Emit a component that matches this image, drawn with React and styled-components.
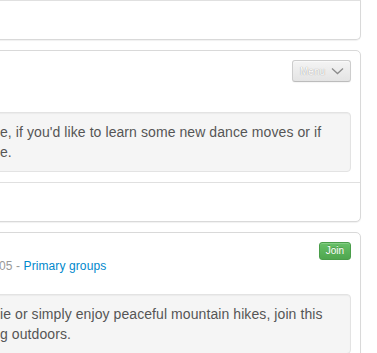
import React from "react";
import styled, { createGlobalStyle } from "styled-components";

const GlobalStyle = createGlobalStyle`
  html, body {
    margin: 0;
    padding: 0;
    background: #ffffff;
    overflow: hidden;
  }
  body {
    font-family: "Liberation Sans", Arial, Helvetica, sans-serif;
    color: #555;
  }
`;

const Feed = styled.div`
  display: flex;
  flex-direction: column;
  gap: 10px;
  width: 381px;
  margin-left: -20px;
`;

const Card = styled.section`
  background: #fff;
  border: 1px solid #d9d9d9;
  border-radius: 5px;
  box-shadow: 0 1px 1px rgba(0, 0, 0, 0.06);
`;

/* the lower part of a card whose top lies above the visible page */
const CardTail = styled(Card)`
  border-top-color: #e0e0e0;
  border-top-left-radius: 0;
  border-top-right-radius: 0;
  height: 38px;
`;

const CardBody = styled.div`
  padding: 9px 9px 10px;
`;

const Header = styled.div`
  display: flex;
  justify-content: space-between;
  align-items: flex-start;
  min-height: 32px;
`;

const Info = styled.div`
  padding: 16px 0 0 10px;
`;

const Meta = styled.div`
  font-size: 12px;
  line-height: 16px;
  color: #999;
  letter-spacing: 0.1px;
  white-space: nowrap;
  margin-left: -1px;
`;

const Link = styled.a`
  color: #0088cc;
  text-decoration: none;
`;

const MenuButton = styled.button`
  display: flex;
  align-items: center;
  gap: 6px;
  height: 22px;
  padding: 0 6px 0 7px;
  border: 1px solid #cdcdcd;
  border-bottom-color: #bcbcbc;
  border-radius: 3px;
  background: linear-gradient(#f4f4f4, #e4e4e4);
  box-shadow: inset 0 1px 0 rgba(255, 255, 255, 0.5), 0 1px 1px rgba(0, 0, 0, 0.04);
  font-family: inherit;
  font-size: 10px;
  color: #ffffff;
  text-shadow: 0 0 1px rgba(0, 0, 0, 0.45);
  cursor: pointer;
`;

const JoinButton = styled.button`
  height: 18px;
  padding: 0 6px;
  border: 1px solid #4a9d4a;
  border-radius: 3px;
  background: linear-gradient(#68c168, #4fa64f);
  box-shadow: inset 0 1px 0 rgba(255, 255, 255, 0.2);
  font-family: inherit;
  font-size: 10px;
  line-height: 16px;
  color: #fff;
  text-shadow: 0 -1px 0 rgba(0, 0, 0, 0.2);
  cursor: pointer;
`;

const Well = styled.div`
  margin-top: 20px;
  padding: 9px;
  background: #f5f5f5;
  border: 1px solid #e3e3e3;
  border-radius: 4px;
  box-shadow: inset 0 1px 1px rgba(0, 0, 0, 0.04);
  font-size: 14px;
  line-height: 20px;
  letter-spacing: 0.08px;
  color: #555;
`;

const Line = styled.div`
  white-space: nowrap;
`;

const Footer = styled.div`
  height: 38px;
  border-top: 1px solid #e0e0e0;
`;

const Chevron = () => (
  <svg width="13" height="8" viewBox="0 0 13 8" aria-hidden="true">
    <polyline
      points="1,1.5 6.5,6.5 12,1.5"
      fill="none"
      stroke="#8c8c8c"
      strokeWidth="1.3"
      strokeLinejoin="miter"
    />
  </svg>
);

const groups = [
  {
    id: 2,
    action: "menu",
    meta: null,
    lines: ["e, if you'd like to learn some new dance moves or if", "e."],
  },
  {
    id: 3,
    action: "join",
    meta: { date: "05", group: "Primary groups" },
    lines: ["ie or simply enjoy peaceful mountain hikes, join this", "g outdoors."],
  },
];

export default function App() {
  return (
    <>
      <GlobalStyle />
      <Feed>
        <CardTail />
        {groups.map((g) => (
          <Card key={g.id}>
            <CardBody>
              <Header>
                <Info>
                  {g.meta && (
                    <Meta>
                      {g.meta.date} - <Link href="#">{g.meta.group}</Link>
                    </Meta>
                  )}
                </Info>
                {g.action === "menu" ? (
                  <MenuButton>
                    Menu
                    <Chevron />
                  </MenuButton>
                ) : (
                  <JoinButton>Join</JoinButton>
                )}
              </Header>
              <Well>
                {g.lines.map((l, i) => (
                  <Line key={i}>{l}</Line>
                ))}
              </Well>
            </CardBody>
            <Footer />
          </Card>
        ))}
      </Feed>
    </>
  );
}
